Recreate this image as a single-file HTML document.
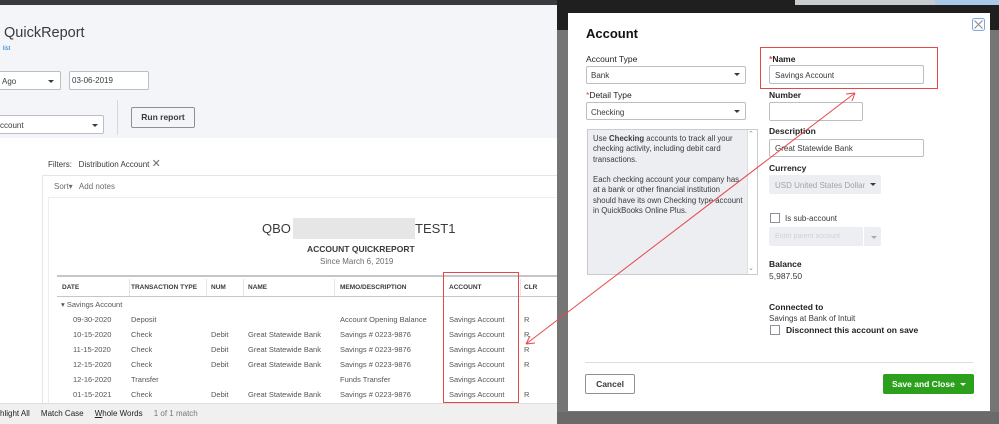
<!DOCTYPE html>
<html><head><meta charset="utf-8"><style>
*{margin:0;padding:0;box-sizing:border-box}
body{width:999px;height:424px;overflow:hidden;position:relative;font-family:"Liberation Sans",sans-serif;background:#fff;color:#393a3d}
.a{position:absolute;white-space:nowrap}
.f8{font-size:8px}
.box{position:absolute;border:1px solid #babec5;background:#fff;border-radius:2px}
.tri{position:absolute;width:0;height:0;border-left:3px solid transparent;border-right:3px solid transparent;border-top:4px solid #393a3d}
.lbl{position:absolute;font-size:8.5px;font-weight:bold;color:#393a3d;white-space:nowrap}
</style></head><body>
<div class="a" style="left:0;top:0;width:557px;height:5px;background:#393a3d"></div>
<div class="a" style="left:0;top:5px;width:557px;height:133px;background:#f4f5f8"></div>
<div class="a" style="left:4px;top:25px;font-size:14.5px;color:#393a3d">QuickReport</div>
<div class="a" style="left:3px;top:46px;font-size:6px;color:#0077c5">list</div>
<div class="box" style="left:-2px;top:71px;width:63px;height:19px"></div>
<div class="a f8" style="left:2px;top:77px">Ago</div><div class="tri" style="left:48px;top:80px;border-top-width:3px"></div>
<div class="box" style="left:69px;top:71px;width:80px;height:19px"></div>
<div class="a f8" style="left:72px;top:76px">03-06-2019</div>
<div class="box" style="left:-2px;top:115px;width:106px;height:19px"></div>
<div class="a f8" style="left:0;top:121px">ccount</div><div class="tri" style="left:92px;top:124px;border-top-width:3px"></div>
<div class="a" style="left:117px;top:100px;width:1px;height:35px;background:#d4d7dc"></div>
<div class="a" style="left:131px;top:107px;width:64px;height:21px;border:1px solid #8d9096;border-radius:2px;background:#f4f5f8;font-size:8.5px;font-weight:bold;text-align:center;line-height:19px">Run report</div>
<div class="a f8" style="left:48px;top:157px">Filters:&nbsp;&nbsp; Distribution Account <span style="font-size:11px;color:#6b6c72">✕</span></div>
<div class="a" style="left:42px;top:175px;width:515px;height:1px;background:#e3e5e8"></div>
<div class="a" style="left:42px;top:175px;width:1px;height:230px;background:#e3e5e8"></div>
<div class="a f8" style="left:54px;top:182px;color:#6b6c72">Sort▾&nbsp;&nbsp; <span style="color:#6b6c72">Add notes</span></div>
<div class="a" style="left:48px;top:197px;width:509px;height:1px;background:#eceef1"></div>
<div class="a" style="left:48px;top:197px;width:1px;height:210px;background:#eceef1"></div>
<div class="a" style="left:262px;top:221px;font-size:13px">QBO</div>
<div class="a" style="left:293px;top:218px;width:122px;height:21px;background:#e6e6e6"></div>
<div class="a" style="left:415px;top:221px;font-size:13px">TEST1</div>
<div class="a" style="left:307px;top:244px;font-size:8.5px;font-weight:bold">ACCOUNT QUICKREPORT</div>
<div class="a f8" style="left:320px;top:257px;color:#6b6c72">Since March 6, 2019</div>
<div class="a" style="left:57px;top:275px;width:500px;height:2px;background:#c4c6ca"></div>
<div class="a" style="left:57px;top:296px;width:500px;height:1px;background:#c4c6ca"></div>
<div style="position:absolute;top:284px;left:0;font-size:6.5px;font-weight:bold">
<span class="a" style="left:62px">DATE</span><span class="a" style="left:131px">TRANSACTION TYPE</span><span class="a" style="left:211px">NUM</span><span class="a" style="left:248px">NAME</span><span class="a" style="left:340px">MEMO/DESCRIPTION</span><span class="a" style="left:449px">ACCOUNT</span><span class="a" style="left:524px">CLR</span></div>
<div class="a" style="left:129px;top:279px;width:1px;height:17px;background:#e3e5e8"></div>
<div class="a" style="left:206px;top:279px;width:1px;height:17px;background:#e3e5e8"></div>
<div class="a" style="left:243px;top:279px;width:1px;height:17px;background:#e3e5e8"></div>
<div class="a" style="left:334px;top:279px;width:1px;height:17px;background:#e3e5e8"></div>
<div class="a" style="left:520px;top:279px;width:1px;height:17px;background:#e3e5e8"></div>
<div class="a" style="left:61px;top:300px;font-size:7.5px;color:#555">▾ Savings Account</div>
<div style="position:absolute;left:0;top:0;font-size:7.5px;color:#555">
<span class="a" style="left:73px;top:315px">09-30-2020</span><span class="a" style="left:131px;top:315px">Deposit</span><span class="a" style="left:340px;top:315px">Account Opening Balance</span><span class="a" style="left:449px;top:315px">Savings Account</span><span class="a" style="left:524px;top:315px">R</span>
<span class="a" style="left:73px;top:330px">10-15-2020</span><span class="a" style="left:131px;top:330px">Check</span><span class="a" style="left:211px;top:330px">Debit</span><span class="a" style="left:248px;top:330px">Great Statewide Bank</span><span class="a" style="left:340px;top:330px">Savings # 0223-9876</span><span class="a" style="left:449px;top:330px">Savings Account</span><span class="a" style="left:524px;top:330px">R</span>
<span class="a" style="left:73px;top:345px">11-15-2020</span><span class="a" style="left:131px;top:345px">Check</span><span class="a" style="left:211px;top:345px">Debit</span><span class="a" style="left:248px;top:345px">Great Statewide Bank</span><span class="a" style="left:340px;top:345px">Savings # 0223-9876</span><span class="a" style="left:449px;top:345px">Savings Account</span><span class="a" style="left:524px;top:345px">R</span>
<span class="a" style="left:73px;top:360px">12-15-2020</span><span class="a" style="left:131px;top:360px">Check</span><span class="a" style="left:211px;top:360px">Debit</span><span class="a" style="left:248px;top:360px">Great Statewide Bank</span><span class="a" style="left:340px;top:360px">Savings # 0223-9876</span><span class="a" style="left:449px;top:360px">Savings Account</span><span class="a" style="left:524px;top:360px">R</span>
<span class="a" style="left:73px;top:375px">12-16-2020</span><span class="a" style="left:131px;top:375px">Transfer</span><span class="a" style="left:340px;top:375px">Funds Transfer</span><span class="a" style="left:449px;top:375px">Savings Account</span>
<span class="a" style="left:73px;top:390px">01-15-2021</span><span class="a" style="left:131px;top:390px">Check</span><span class="a" style="left:211px;top:390px">Debit</span><span class="a" style="left:248px;top:390px">Great Statewide Bank</span><span class="a" style="left:340px;top:390px">Savings # 0223-9876</span><span class="a" style="left:449px;top:390px">Savings Account</span><span class="a" style="left:524px;top:390px">R</span>
</div>
<div class="a" style="left:443px;top:272px;width:76px;height:131px;border:1px solid #e8474a"></div>
<div class="a" style="left:0;top:403px;width:557px;height:21px;background:#f0f0f0;border-top:1px solid #ddd"></div>
<div class="a" style="left:0;top:409px;font-size:8px;color:#222">hlight All&nbsp;&nbsp;&nbsp;&nbsp; Match Case&nbsp;&nbsp;&nbsp;&nbsp; <u>W</u>hole Words&nbsp;&nbsp;&nbsp;&nbsp; <span style="color:#777">1 of 1 match</span></div>
<div class="a" style="left:557px;top:0;width:442px;height:424px;background:#757575"></div>
<div class="a" style="left:557px;top:0;width:442px;height:30px;background:#1f1f1f"></div>
<div class="a" style="left:795px;top:0;width:170px;height:5px;background:#c8ccd0"></div>
<div class="a" style="left:935px;top:0;width:64px;height:5px;background:#aac8e8"></div>
<div class="a" style="left:557px;top:412px;width:442px;height:12px;background:#6a6a6a"></div>
<div class="a" style="left:568px;top:13px;width:422px;height:398px;background:#fff"></div>
<div class="a" style="left:586px;top:26px;font-size:13px;font-weight:bold;color:#111">Account</div>
<svg class="a" style="left:972px;top:18px" width="13" height="13" viewBox="0 0 13 13"><rect x=".5" y=".5" width="12" height="12" rx="2" fill="#fff" stroke="#7aa7e8"/><path d="M2.5 2.5L10.5 10.5M10.5 2.5L2.5 10.5" stroke="#8d9096" stroke-width="1.2"/></svg>
<div class="lbl" style="left:586px;top:54px;font-weight:normal;color:#222">Account Type</div>
<div class="box" style="left:586px;top:66px;width:160px;height:18px"></div><div class="a f8" style="left:591px;top:71px">Bank</div><div class="tri" style="left:734px;top:73px;border-top-width:3px"></div>
<div class="lbl" style="left:586px;top:90px;font-weight:normal;color:#222"><span style="color:#e8474a">*</span>Detail Type</div>
<div class="box" style="left:586px;top:102px;width:160px;height:18px"></div><div class="a f8" style="left:591px;top:108px">Checking</div><div class="tri" style="left:734px;top:110px;border-top-width:3px"></div>
<div class="a" style="left:587px;top:129px;width:171px;height:146px;border:1px solid #c8cbd0;background:#eceef1"></div>
<div class="a" style="left:747px;top:130px;width:10px;height:144px;background:#fff;border-left:1px solid #ddd"></div>
<div class="a" style="left:748px;top:130px;font-size:7px;color:#888">⌃</div>
<div class="a" style="left:748px;top:264px;font-size:7px;color:#888">⌄</div>
<div class="a" style="left:593px;top:134px;font-size:7.8px;line-height:10.3px;color:#393a3d;white-space:normal;width:152px">Use <b>Checking</b> accounts to track all your checking activity, including debit card transactions.<br><br>Each checking account your company has at a bank or other financial institution should have its own Checking type account in QuickBooks Online Plus.</div>
<div class="a" style="left:760px;top:47px;width:178px;height:42px;border:1px solid #e8474a"></div>
<div class="lbl" style="left:769px;top:54px;color:#222"><span style="color:#e8474a">*</span>Name</div>
<div class="box" style="left:769px;top:65px;width:155px;height:19px"></div><div class="a f8" style="left:775px;top:71px">Savings Account</div>
<div class="lbl" style="left:769px;top:90px;color:#222">Number</div>
<div class="box" style="left:769px;top:102px;width:94px;height:19px"></div>
<div class="lbl" style="left:769px;top:126px;color:#222">Description</div>
<div class="box" style="left:769px;top:139px;width:155px;height:18px"></div><div class="a f8" style="left:775px;top:144px">Great Statewide Bank</div>
<div class="lbl" style="left:769px;top:163px;color:#222">Currency</div>
<div class="a" style="left:769px;top:175px;width:112px;height:19px;background:#eceef1;border-radius:2px"></div><div class="a f8" style="left:775px;top:181px;color:#a0a3a8">USD United States Dollar</div><div class="tri" style="left:870px;top:183px;border-top-width:3px"></div>
<div class="a" style="left:770px;top:213px;width:10px;height:10px;border:1px solid #8d9096;background:#fff"></div>
<div class="a f8" style="left:785px;top:214px">Is sub-account</div>
<div class="a" style="left:769px;top:227px;width:112px;height:19px;background:#eceef1;border-radius:2px"></div><div class="a" style="left:863px;top:227px;width:1px;height:19px;background:#fff"></div><div class="a" style="left:775px;top:233px;font-size:7px;color:#d0d2d6">Enter parent account</div><div class="tri" style="left:871px;top:236px;border-top-width:3px;border-top-color:#aaa"></div>
<div class="lbl" style="left:769px;top:259px;color:#222">Balance</div>
<div class="a" style="left:769px;top:271px;font-size:8.5px">5,987.50</div>
<div class="lbl" style="left:769px;top:302px;color:#222">Connected to</div>
<div class="a f8" style="left:769px;top:314px">Savings at Bank of Intuit</div>
<div class="a" style="left:770px;top:325px;width:10px;height:10px;border:1px solid #8d9096;background:#fff"></div>
<div class="lbl" style="left:786px;top:325px;color:#222">Disconnect this account on save</div>
<div class="a" style="left:585px;top:362px;width:388px;height:1px;background:#dcdee2"></div>
<div class="a" style="left:585px;top:374px;width:50px;height:20px;border:1px solid #8d9096;border-radius:2px;font-size:8.5px;font-weight:bold;text-align:center;line-height:18px">Cancel</div>
<div class="a" style="left:883px;top:374px;width:91px;height:20px;background:#2ca01c;border-radius:2px;color:#fff;font-size:8.5px;font-weight:bold;line-height:20px;padding-left:9px">Save and Close</div>
<div class="tri" style="left:960px;top:383px;border-top-color:#fff;border-top-width:3px"></div>
<svg class="a" style="left:0;top:0" width="999" height="424"><g stroke="#e8474a" stroke-width="1" fill="none"><path d="M855 93L526 344"/><path d="M855 93L846 94M855 93L852 101"/><path d="M526 344L530 336M526 344L535 343"/></g></svg>
</body></html>
